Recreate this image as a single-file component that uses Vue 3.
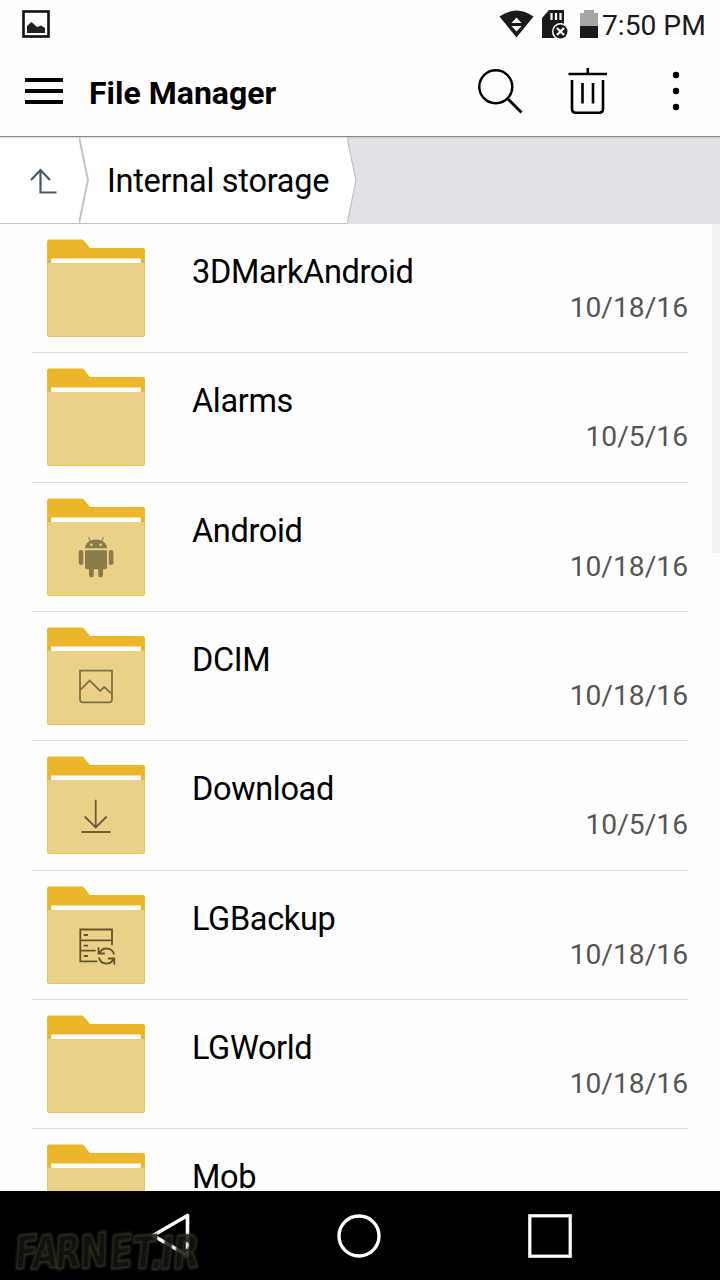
<script setup>
const folders = [
  { name: '3DMarkAndroid', date: '10/18/16' },
  { name: 'Alarms', date: '10/5/16' },
  { name: 'Android', date: '10/18/16', icon: 'android' },
  { name: 'DCIM', date: '10/18/16', icon: 'image' },
  { name: 'Download', date: '10/5/16', icon: 'download' },
  { name: 'LGBackup', date: '10/18/16', icon: 'backup' },
  { name: 'LGWorld', date: '10/18/16' },
  { name: 'Mob', date: '' }
]

// Letters of the site mark, each one slightly tilted
const mark = [
  { char: 'F', x: 4, y: 42, tilt: -6 },
  { char: 'A', x: 21, y: 42, tilt: -5 },
  { char: 'R', x: 44, y: 42, tilt: -6 },
  { char: 'N', x: 70, y: 42, tilt: -9 },
  { char: 'E', x: 99, y: 42, tilt: -7 },
  { char: 'T', x: 121, y: 42, tilt: -4 },
  { char: '.', x: 139, y: 42, tilt: 0 },
  { char: 'I', x: 149, y: 42, tilt: -3 },
  { char: 'R', x: 162, y: 42, tilt: -5 }
]
</script>

<template>
  <div class="screen">
    <!-- Status bar -->
    <div class="status">
      <svg class="statusImage" width="28" height="28" viewBox="0 0 28 28">
        <rect x="1.5" y="1.5" width="25" height="25" fill="none" stroke="#111" stroke-width="2.6" />
        <path d="M5 23V16L9.5 12L15 17L19 15.5L23 18V23Z" fill="#222" />
      </svg>
      <svg class="wifi" width="35" height="28" viewBox="0 0 35 28">
        <path d="M0.500 6.500Q17.500 -5.500 34.500 6.500L17.500 27.500Z" fill="#1a1a1a" />
        <path d="M12.500 13L17.500 7.500L22.500 13ZM12.500 16L17.500 21.500L22.500 16Z" fill="#fff" />
      </svg>
      <svg class="sd" width="27" height="29" viewBox="0 0 27 29">
        <path d="M7 0H22V28H0V8Z" fill="#1a1a1a" />
        <path d="M9.500 3V10M14 3V10M18.500 3V10" stroke="#fff" stroke-width="2.200" />
        <circle cx="18.500" cy="21.500" r="8.500" fill="#fff" />
        <circle cx="18.500" cy="21.500" r="7" fill="#1a1a1a" />
        <path d="M15 18L22 25M22 18L15 25" stroke="#fff" stroke-width="2.300" />
      </svg>
      <svg class="battery" width="18" height="28" viewBox="0 0 18 28">
        <path d="M4 0H14V3H18V16H0V3H4Z" fill="#a5a5a5" />
        <rect y="16" width="18" height="12" fill="#1a1a1a" />
      </svg>
      <span class="clock">7:50 PM</span>
    </div>

    <!-- App bar -->
    <header class="appBar">
      <svg width="38" height="26" viewBox="0 0 38 26">
        <path d="M0 2H38M0 13H38M0 24H38" stroke="#000" stroke-width="4" />
      </svg>
      <h1 class="title">File Manager</h1>
      <svg class="search" width="45" height="45" viewBox="0 0 45 45">
        <circle cx="17.800" cy="17.800" r="16.500" fill="none" stroke="#000" stroke-width="2.400" />
        <path d="M29.500 29.500L43.500 43.500" stroke="#000" stroke-width="2.800" />
      </svg>
      <svg class="trash" width="39" height="46" viewBox="0 0 39 46" fill="none" stroke="#000">
        <path d="M0.500 6H39M19.800 0V6" stroke-width="2.600" />
        <path d="M4 12V41Q4 44.700 7.700 44.700H31.300Q35 44.700 35 41V12" stroke-width="2.600" />
        <path d="M14.500 15V35.500M25 15V35.500" stroke-width="2.600" />
      </svg>
      <svg width="8" height="40" viewBox="0 0 8 40">
        <circle cx="4" cy="4" r="3.200" />
        <circle cx="4" cy="20" r="3.200" />
        <circle cx="4" cy="36" r="3.200" />
      </svg>
    </header>

    <!-- Breadcrumb -->
    <nav class="crumbs">
      <div class="up">
        <svg width="27" height="26" viewBox="0 0 27 26" fill="none" stroke="#485866" stroke-width="2.200">
          <path d="M1 12L10.500 2L20 12M10.500 2V24.500H26.500" />
        </svg>
      </div>
      <svg class="divider" width="10" height="87" viewBox="0 0 10 87">
        <path d="M0 0L9 43.500L0 87" fill="none" stroke="#c4c4c4" stroke-width="2" />
      </svg>
      <div class="crumb">Internal storage</div>
      <svg width="10" height="87" viewBox="0 0 10 87">
        <path d="M0 0L9 43.500L0 87Z" fill="#fff" />
        <path d="M0 0L9 43.500L0 87" fill="none" stroke="#c4c4c4" stroke-width="1.300" />
      </svg>
    </nav>

    <!-- Folder list -->
    <main class="list">
      <div v-for="folder in folders" :key="folder.name" class="row">
        <svg class="folder" width="98" height="98" viewBox="0 0 98 98">
          <path d="M0 3Q0 0.500 2.500 0.500H34.500Q36 0.500 37 1.700L43 9H95.500Q98 9 98 11.500V40H0Z" fill="#ebb62a" />
          <rect x="4" y="19.500" width="90" height="5" fill="#fff" />
          <path d="M0 24H98V95.500Q98 98 95.500 98H2.500Q0 98 0 95.500Z" fill="#ebd088" />
          <path d="M0.500 24V95Q0.500 97.500 3 97.500H95Q97.500 97.500 97.500 95V24" fill="none" stroke="#e9c45a" />

          <g v-if="folder.icon === 'android'" fill="#8c7b4d">
            <path d="M38 50.300C38 38.500 60 38.500 60 50.300Z" />
            <path d="M43.500 43.500L41.500 39.500M54.500 43.500L56.500 39.500" stroke="#8c7b4d" stroke-width="1.100" />
            <circle cx="44.300" cy="46.800" r="1.300" fill="#ebd088" />
            <circle cx="53.700" cy="46.800" r="1.300" fill="#ebd088" />
            <path d="M38 52.300H60V69.300Q60 71.300 58 71.300H40Q38 71.300 38 69.300Z" />
            <rect x="31.700" y="52" width="4.600" height="15" rx="2.300" />
            <rect x="61.800" y="52" width="4.600" height="15" rx="2.300" />
            <rect x="42" y="66" width="4.800" height="13.500" rx="2.400" />
            <rect x="51.200" y="66" width="4.800" height="13.500" rx="2.400" />
          </g>
          <g v-else-if="folder.icon === 'image'" fill="none" stroke="#82704a" stroke-width="1.800">
            <path d="M33 43.700H65V72.500Q65 75.300 62.200 75.300H35.800Q33 75.300 33 72.500Z" />
            <path d="M33.500 62.700L42.700 53.500L53.200 64L57.200 60L65 67" />
          </g>
          <g v-else-if="folder.icon === 'download'" fill="none" stroke="#6d5c37" stroke-width="1.800">
            <path d="M48.700 43.700V71.500M37.700 60.500L48.700 71.500L59.700 60.500M34.300 76H63.700" />
          </g>
          <g v-else-if="folder.icon === 'backup'" fill="none" stroke="#65552f" stroke-width="1.800">
            <path d="M50.300 75.300H33.300V43.500H65V59.300M33.500 54.400H65M33.500 64.700H48.700" />
            <path d="M36.700 49H41M36.700 59.600H41M36.700 70H41" />
            <path d="M67 68.500C65.500 61 55.500 60.500 52.500 67.200M51.500 61.300V67.500H57.800" />
            <path d="M52 71.500C53.500 79 63.500 79.500 66.500 73M67.300 78.700V72.500H61" />
          </g>
        </svg>
        <div class="info">
          <span class="name">{{ folder.name }}</span>
          <span class="date">{{ folder.date }}</span>
        </div>
      </div>
      <div class="scrollbar"></div>
    </main>

    <!-- System navigation -->
    <footer class="navBar">
      <svg class="back" width="39" height="45" viewBox="0 0 39 45">
        <path d="M2 22.500L36.500 2.500V42.500Z" fill="none" stroke="#fff" stroke-width="3.600" stroke-linejoin="round" />
      </svg>
      <svg class="home" width="44" height="44" viewBox="0 0 44 44">
        <circle cx="22" cy="22" r="20" fill="none" stroke="#fff" stroke-width="3.400" />
      </svg>
      <svg class="recent" width="44" height="44" viewBox="0 0 44 44">
        <rect x="1.800" y="1.800" width="40.400" height="40.400" fill="none" stroke="#fff" stroke-width="3.200" />
      </svg>
      <svg class="mark" width="200" height="54" viewBox="0 0 200 54">
        <text
          v-for="(letter, index) in mark"
          :key="index"
          :transform="`translate(${letter.x} ${letter.y}) rotate(${letter.tilt}) skewX(-10) scale(0.9 1.2)`"
        >{{ letter.char }}</text>
      </svg>
    </footer>
  </div>
</template>

<style>
body {
  margin: 0;
  background: #fff;
}
</style>

<style scoped>
.screen {
  display: flex;
  flex-direction: column;
  width: 720px;
  height: 1280px;
  overflow: hidden;
  background: #fefefe;
  color: #000;
  font-family: Roboto, sans-serif;
}
svg {
  display: block;
  flex: none;
}

/* Status bar */
.status {
  display: flex;
  align-items: flex-start;
  box-sizing: border-box;
  height: 48px;
  padding: 10px 15px 0 22px;
}
.wifi {
  margin-left: auto;
}
.sd {
  margin-left: 8px;
}
.battery {
  margin-left: 11px;
}
.clock {
  width: 103px;
  margin-left: 4px;
  font-size: 28.2px;
  line-height: 32px;
  color: #1a1a1a;
  white-space: nowrap;
}

/* App bar */
.appBar {
  display: flex;
  align-items: center;
  box-sizing: border-box;
  height: 89px;
  padding: 0 40px 2px 25px;
  border-bottom: 1px solid #8a8a8a;
}
.title {
  margin: 4px auto 0 26px;
  font-size: 32px;
  line-height: 38px;
  font-weight: 700;
}
.trash {
  margin: 0 65px 0 45px;
}

/* Breadcrumb */
.crumbs {
  display: flex;
  height: 87px;
  background: linear-gradient(#c4c5c8, #e1e2e6 2px);
}
.up,
.divider,
.crumb {
  box-sizing: border-box;
  height: 87px;
  background: linear-gradient(#d4d4d4, #fff 2px);
  border-bottom: 1px solid #c4c4c4;
}
.up {
  width: 79px;
  padding: 31px 0 0 30px;
}
.crumb {
  width: 258px;
  padding-left: 18px;
  font-size: 32.5px;
  letter-spacing: -0.27px;
  line-height: 88px;
  white-space: nowrap;
}

/* Folder list */
.list {
  position: relative;
  flex: 1;
  min-height: 0;
  overflow: hidden;
}
.row {
  display: flex;
  box-sizing: border-box;
  height: 129.33px;
  margin: 0 32px;
  padding: 15px 0 0 15px;
  border-bottom: 1px solid #dedede;
}
.info {
  display: flex;
  flex: 1;
  flex-direction: column;
  padding-left: 47px;
}
.name {
  align-self: flex-start;
  margin-top: 14px;
  font-size: 32.5px;
  letter-spacing: -0.35px;
  line-height: 38px;
}
.date {
  align-self: flex-end;
  margin-top: 1px;
  font-size: 28.2px;
  line-height: 32px;
  color: #555;
}
.scrollbar {
  position: absolute;
  top: 0;
  right: 0;
  width: 8px;
  height: 329px;
  background: #f2f2f2;
}

/* System navigation */
.navBar {
  position: relative;
  display: flex;
  align-items: center;
  box-sizing: border-box;
  height: 89px;
  padding-left: 151px;
  background: #000;
}
.home {
  margin-left: 147px;
}
.recent {
  margin-left: 147px;
}
.mark {
  position: absolute;
  left: 10px;
  top: 36px;
}
.mark text {
  font-family: "DejaVu Sans", sans-serif;
  font-size: 37px;
  font-weight: 700;
  fill: #000;
  fill-opacity: 0.6;
  stroke: #2b2a1f;
  stroke-width: 1.2px;
  filter: drop-shadow(0 0 1.5px #4a4834);
}
</style>
